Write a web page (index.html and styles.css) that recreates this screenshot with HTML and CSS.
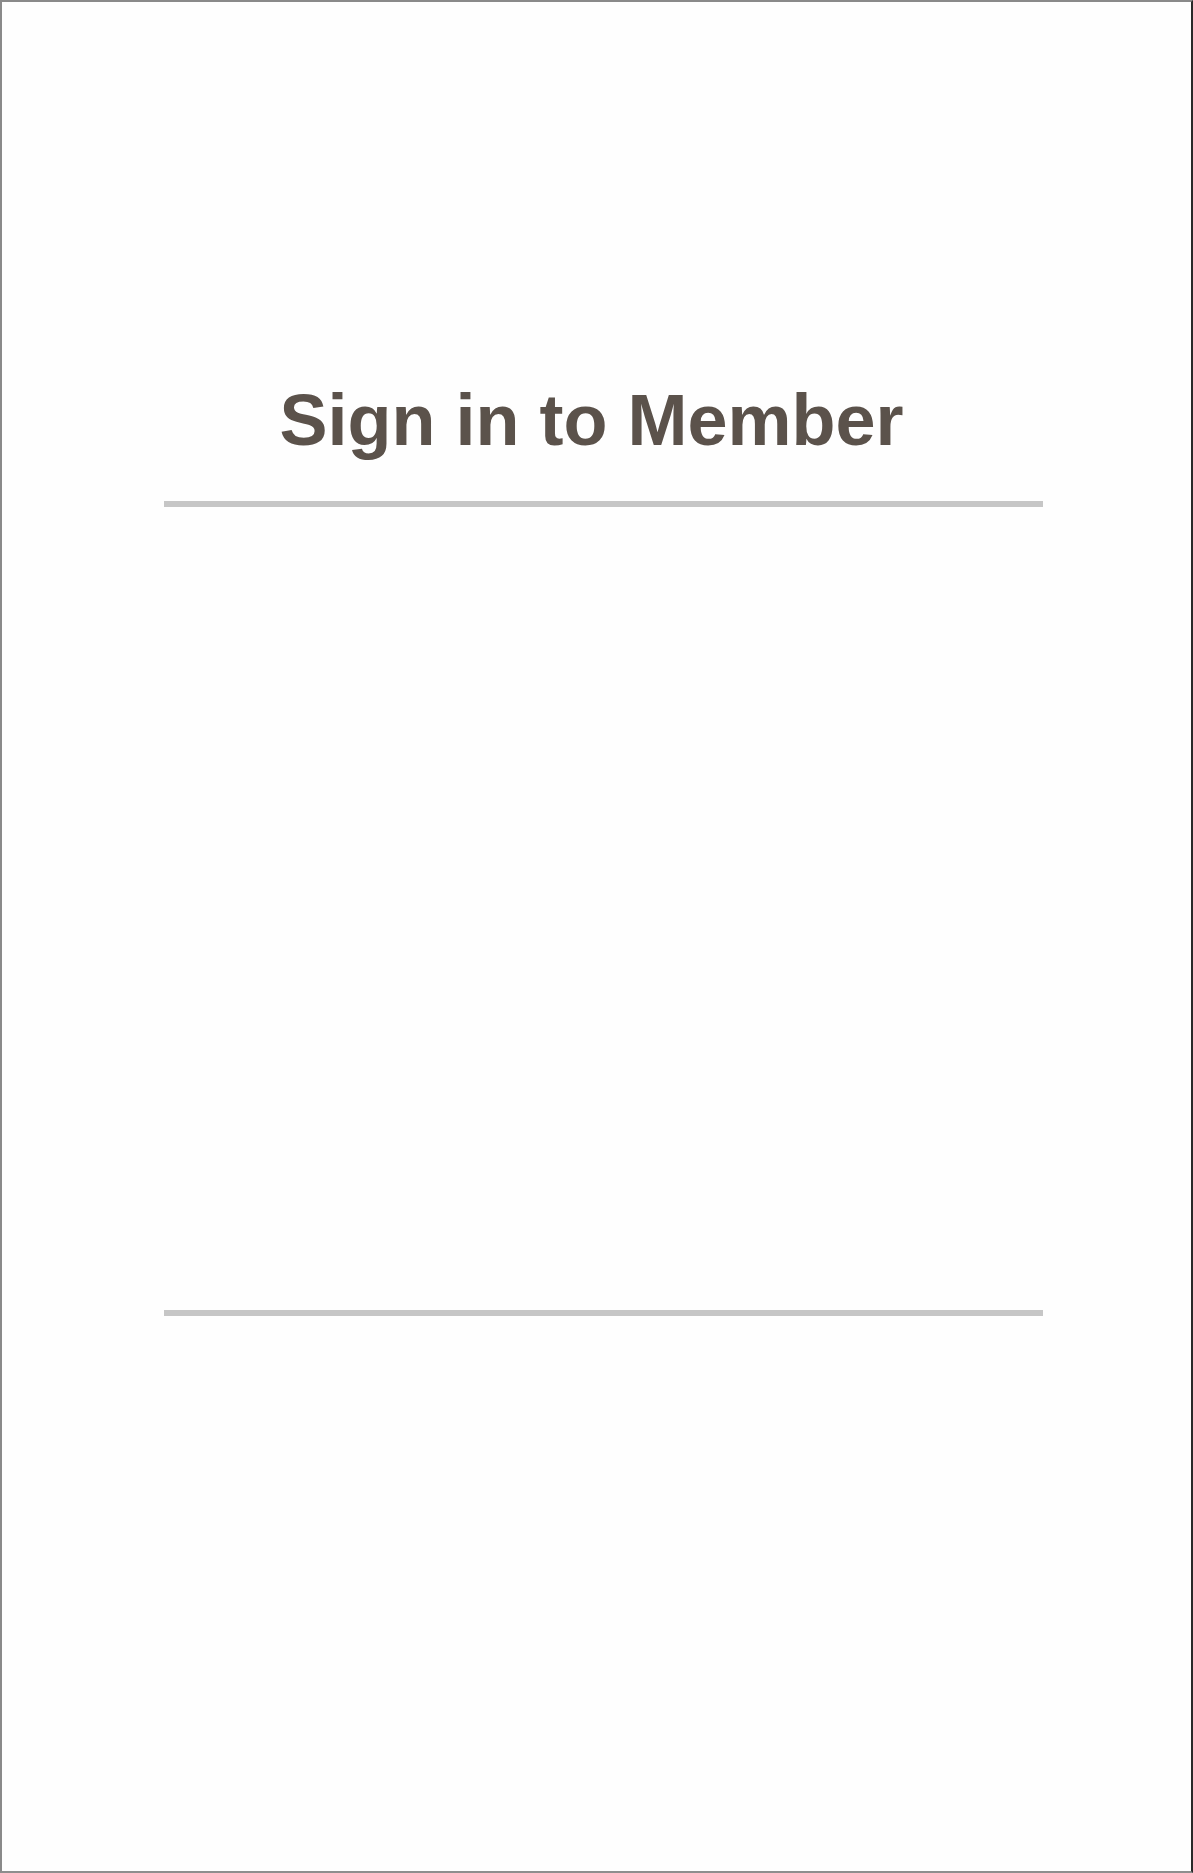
FILE: index.html
```html
<!DOCTYPE html>
<html>
<head>
<meta charset="utf-8">
<title>Sign in to Member</title>
<link rel="stylesheet" href="styles.css">
</head>
<body>
<div class="frame">
  <h1 class="title">Sign in to Member</h1>
  <div class="rule"></div>
  <div class="content"></div>
  <div class="rule"></div>
</div>
</body>
</html>
```
FILE: styles.css
```css
html, body {
  margin: 0;
  padding: 0;
  background: #ffffff;
}
.frame {
  box-sizing: border-box;
  width: 1193px;
  height: 1873px;
  border-top: 2px solid #8a8a8a;
  border-left: 2px solid #8a8a8a;
  border-bottom: 2px solid #8e8e8e;
  border-right: 2px solid #2a2a2a;
  background: #fefefe;
  padding-top: 382px;
  display: flex;
  flex-direction: column;
}
.title {
  margin: 0;
  padding-right: 10px;
  font-family: "Liberation Sans", Arial, sans-serif;
  font-weight: bold;
  font-size: 72px;
  line-height: 72px;
  color: #5b524b;
  text-align: center;
}
.rule {
  margin-left: 162px;
  width: 879px;
  height: 6px;
  background: #c6c6c6;
  flex: none;
}
.title + .rule {
  margin-top: 45px;
}
.content {
  height: 803px;
  flex: none;
}
```
